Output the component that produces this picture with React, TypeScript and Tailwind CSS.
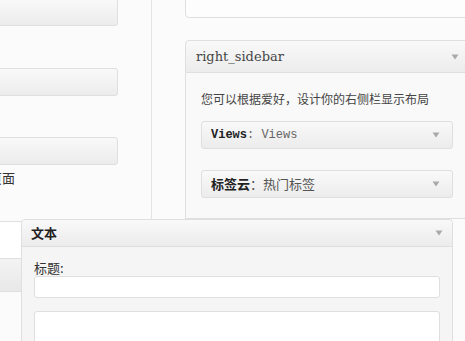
import React from "react";

const Arrow = () => (
  <svg width="8" height="6" viewBox="0 0 8 6" className="shrink-0">
    <polygon points="0.5,0.5 7.5,0.5 4,5.5" fill="#a9a9a9" />
  </svg>
);

const cjk = { fontFamily: '"Noto Sans CJK SC", "Liberation Sans", sans-serif' };

export default function App() {
  return (
    <div
      className="relative w-[465px] h-[341px] overflow-hidden bg-[#fbfbfb] flex"
      style={cjk}
    >
      {/* left column */}
      <div className="w-[152px] shrink-0 h-full border-r border-[#e3e3e3]">
        <div className="-ml-[200px] w-[318px] flex flex-col">
          <div className="mt-[-2px] h-[28px] rounded-[3px] border border-[#dfdfdf] bg-gradient-to-b from-[#f9f9f9] to-[#ececec]" />
          <div className="mt-[42px] h-[28px] rounded-[3px] border border-[#dfdfdf] bg-gradient-to-b from-[#f9f9f9] to-[#ececec]" />
          <div className="mt-[41px] h-[28px] rounded-[3px] border border-[#dfdfdf] bg-gradient-to-b from-[#f9f9f9] to-[#ececec]" />
          <div className="mt-[4px] w-[215px] text-right text-[13px] leading-[18px] text-[#333]">
            是否显示页面
          </div>
          <div className="mt-[34px] h-[37px] border-t border-[#dfdfdf] bg-white" />
          <div className="h-[34px] border-y border-[#dfdfdf] bg-gradient-to-b from-[#f3f3f3] to-[#e8e8e8]" />
        </div>
      </div>

      {/* right column */}
      <div className="flex-1 pl-[33px]">
        <div className="w-[300px] flex flex-col">
          <div className="mt-[-10px] h-[28px] rounded-b-[4px] border border-[#dfdfdf] bg-[#fdfdfd]" />
          <div className="mt-[22px] h-[33px] rounded-t-[4px] border border-[#dfdfdf] bg-gradient-to-b from-[#f9f9f9] to-[#ececec] flex items-center pl-[10px]">
            <span
              className="w-[255px] text-[13px] text-[#464646]"
              style={{ fontFamily: '"DejaVu Serif", "Liberation Serif", serif' }}
            >
              right_sidebar
            </span>
            <Arrow />
          </div>
          <div className="border-x border-b border-[#dfdfdf] bg-[#f9f9f9] pl-[15px] pt-[17px] pb-[20px]">
            <div className="text-[12px] leading-[18px] text-[#444] whitespace-nowrap">
              您可以根据爱好，设计你的右侧栏显示布局
            </div>
            <div className="mt-[13px] w-[252px] h-[28px] rounded-[3px] border border-[#dfdfdf] bg-gradient-to-b from-[#f9f9f9] to-[#ececec] flex items-center pl-[9px] pr-[12px]">
              <span
                className="flex-1 text-[12px] font-bold text-[#222] whitespace-nowrap"
                style={{ fontFamily: '"Liberation Mono", monospace' }}
              >
                Views<span className="font-normal text-[#666]">: Views</span>
              </span>
              <Arrow />
            </div>
            <div className="mt-[21px] w-[252px] h-[28px] rounded-[3px] border border-[#dfdfdf] bg-gradient-to-b from-[#f9f9f9] to-[#ececec] flex items-center pl-[9px] pr-[12px]">
              <span className="flex-1 text-[13px] font-bold text-[#222] whitespace-nowrap">
                标签云<span className="font-normal text-[#555]">：热门标签</span>
              </span>
              <Arrow />
            </div>
          </div>
        </div>
      </div>

      {/* dragged widget */}
      <div className="absolute left-[21px] top-[219px] w-[432px] h-[140px] rounded-t-[4px] border border-[#dfdfdf] bg-[#f5f5f5] flex flex-col">
        <div className="shrink-0 h-[27px] border-b border-[#dfdfdf] bg-gradient-to-b from-[#f9f9f9] to-[#ececec] flex items-center pl-[9px] pr-[9px] rounded-t-[4px]">
          <span className="flex-1 text-[13px] font-bold text-[#222]">文本</span>
          <Arrow />
        </div>
        <div className="shrink-0 pl-[12px] pr-[12px] pt-[13px]">
          <div className="text-[13px] leading-[15px] text-[#333]">标题:</div>
          <div className="mt-[1px] h-[22px] rounded-[3px] border border-[#dfdfdf] bg-white" />
          <div className="mt-[13px] h-[80px] rounded-[3px] border border-[#dfdfdf] bg-white" />
        </div>
      </div>
    </div>
  );
}
